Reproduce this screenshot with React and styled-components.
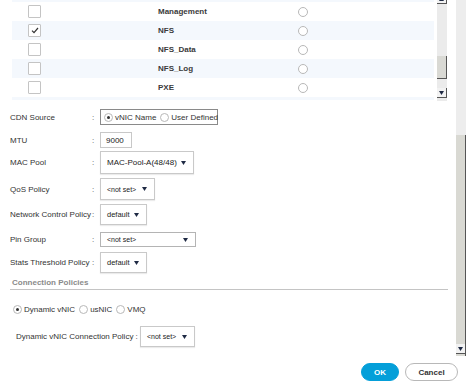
import React from 'react'
import styled, { createGlobalStyle } from 'styled-components'

const GlobalStyle = createGlobalStyle`
  html, body {
    margin: 0;
    padding: 0;
    background: #ffffff;
  }
  body {
    font-family: "Liberation Sans", Arial, sans-serif;
    color: #333333;
  }
`

const vlans = [
  { name: '' },
  { name: 'Management' },
  { name: 'NFS', checked: true },
  { name: 'NFS_Data' },
  { name: 'NFS_Log' },
  { name: 'PXE' },
  { name: '' }
]

const Arrow = ({ up }) => (
  <svg width="5" height="4" viewBox="0 0 5 4">
    <path d={up ? 'M0 4 L2.5 0 L5 4 Z' : 'M0 0 L5 0 L2.5 4 Z'} fill="#1f2a44" />
  </svg>
)

const Check = () => (
  <svg width="8" height="7" viewBox="0 0 8 7">
    <path d="M1 3.6 L3 5.6 L7 1" fill="none" stroke="#333" strokeWidth="1.2" />
  </svg>
)

const Radio = ({ checked, size = 9 }) => (
  <RadioCircle size={size}>{checked && <RadioDot />}</RadioCircle>
)

const Select = ({ value, width, height, size = 7.5, thin }) => (
  <SelectBox width={width} height={height} thin={thin}>
    <SelectText size={size}>{value}</SelectText>
    <Arrow />
  </SelectBox>
)

const App = () => {
  return (
    <Page>
      <GlobalStyle />
      <Body>
        <Main>
          <TablePane>
            <Viewport>
              <RowList>
                {vlans.map((v, i) => (
                  <VlanRow key={i} shaded={i % 2 === 0}>
                    <CheckCell>
                      <CheckBox>{v.checked && <Check />}</CheckBox>
                    </CheckCell>
                    <NameCell>{v.name}</NameCell>
                    <RadioCell>
                      <Radio size={10} />
                    </RadioCell>
                  </VlanRow>
                ))}
              </RowList>
            </Viewport>
            <InnerScroll>
              <ScrollButton>
                <Arrow up />
              </ScrollButton>
              <Track size={52} />
              <InnerThumb />
              <Track size={9} />
              <ScrollButton>
                <Arrow />
              </ScrollButton>
            </InnerScroll>
          </TablePane>

          <Form>
            <Field top={8}>
              <Label>CDN Source</Label>
              <Colon>:</Colon>
              <RadioGroup>
                <Radio checked />
                <OptionText>vNIC Name</OptionText>
                <Radio />
                <OptionText>User Defined</OptionText>
              </RadioGroup>
            </Field>
            <Field top={7}>
              <Label>MTU</Label>
              <Colon>:</Colon>
              <TextInput>9000</TextInput>
            </Field>
            <Field top={3}>
              <Label>MAC Pool</Label>
              <Colon>:</Colon>
              <Select value="MAC-Pool-A(48/48)" width={94} height={23} size={8} />
            </Field>
            <Field top={4}>
              <Label>QoS Policy</Label>
              <Colon>:</Colon>
              <Select value="<not set>" width={55} height={22} size={7} />
            </Field>
            <Field top={4}>
              <Label>Network Control Policy</Label>
              <Colon>:</Colon>
              <Select value="default" width={47} height={21} />
            </Field>
            <Field top={7}>
              <Label>Pin Group</Label>
              <Colon>:</Colon>
              <Select value="<not set>" width={96} height={15} size={7} thin />
            </Field>
            <Field top={5}>
              <Label>Stats Threshold Policy</Label>
              <Colon>:</Colon>
              <Select value="default" width={47} height={21} />
            </Field>

            <SectionTitle>Connection Policies</SectionTitle>
            <Divider />

            <ChoiceRow>
              <Radio checked />
              <OptionText>Dynamic vNIC</OptionText>
              <Radio />
              <OptionText>usNIC</OptionText>
              <Radio />
              <OptionText>VMQ</OptionText>
            </ChoiceRow>

            <PolicyRow>
              <PolicyLabel>Dynamic vNIC Connection Policy :</PolicyLabel>
              <Select value="<not set>" width={55} height={21} size={7} />
            </PolicyRow>
          </Form>
        </Main>

        <OuterScroll>
          <OuterTrack />
          <OuterThumb>
            <ScrollButton>
              <Arrow />
            </ScrollButton>
          </OuterThumb>
        </OuterScroll>
      </Body>

      <Footer>
        <Button primary>OK</Button>
        <Button>Cancel</Button>
      </Footer>
    </Page>
  )
}

const Page = styled.div`
  width: 473px;
  height: 391px;
  display: flex;
  flex-direction: column;
  overflow: hidden;
  background: #ffffff;
`

const Body = styled.div`
  display: flex;
  height: 356px;
`

const Main = styled.div`
  flex: 1;
  min-width: 0;
  display: flex;
  flex-direction: column;
`

const TablePane = styled.div`
  display: flex;
  height: 101px;
  padding-left: 12px;
  overflow: hidden;
`

const Viewport = styled.div`
  width: 422px;
  height: 100px;
  overflow: hidden;
`

const RowList = styled.div`
  margin-top: -17px;
`

const VlanRow = styled.div`
  display: grid;
  grid-template-columns: 146px 128px 1fr;
  align-items: center;
  height: 19px;
  background: ${props => (props.shaded ? '#f4f8fd' : '#ffffff')};
`

const CheckCell = styled.div`
  padding-left: 16px;
  display: flex;
`

const CheckBox = styled.div`
  width: 11px;
  height: 11px;
  border: 1px solid #c4c4c4;
  border-radius: 1px;
  background: #ffffff;
  display: flex;
  align-items: center;
  justify-content: center;
`

const NameCell = styled.div`
  font-size: 8px;
  font-weight: bold;
  color: #3a3a3a;
`

const RadioCell = styled.div`
  padding-left: 12px;
  display: flex;
`

const RadioCircle = styled.div`
  width: ${props => props.size - 2}px;
  height: ${props => props.size - 2}px;
  border: 1px solid #b8b8b8;
  border-radius: 50%;
  background: #ffffff;
  display: flex;
  align-items: center;
  justify-content: center;
  flex-shrink: 0;
`

const RadioDot = styled.div`
  width: 3px;
  height: 3px;
  border-radius: 50%;
  background: #333333;
`

const InnerScroll = styled.div`
  width: 10px;
  margin-left: 3px;
  margin-top: -6px;
  display: flex;
  flex-direction: column;
  background: #ebebeb;
`

const ScrollButton = styled.div`
  width: 9px;
  height: 9px;
  background: #f2f2f2;
  border-right: 1px solid #555555;
  border-bottom: 1px solid #555555;
  display: flex;
  align-items: center;
  justify-content: center;
  flex-shrink: 0;
`

const Track = styled.div`
  height: ${props => props.size}px;
`

const InnerThumb = styled.div`
  height: 23px;
  background: #d9d9d4;
  border-right: 1px solid #555555;
  border-bottom: 1px solid #555555;
  box-sizing: border-box;
`

const Form = styled.div`
  display: flex;
  flex-direction: column;
  padding-left: 10px;
  font-size: 8px;
`

const Field = styled.div`
  display: flex;
  align-items: center;
  margin-top: ${props => props.top}px;
`

const Label = styled.div`
  width: 82px;
  white-space: nowrap;
  color: #333333;
`

const Colon = styled.div`
  width: 8px;
  color: #555555;
`

const RadioGroup = styled.div`
  width: 118px;
  height: 16px;
  box-sizing: border-box;
  border: 1px solid #8a8a8a;
  display: flex;
  align-items: center;
  gap: 2px;
  padding-left: 3px;
  white-space: nowrap;
`

const OptionText = styled.span`
  color: #333333;
  margin-right: 2px;
  white-space: nowrap;
  flex-shrink: 0;
`

const TextInput = styled.div`
  width: 32px;
  height: 16px;
  box-sizing: border-box;
  border: 1px solid #c8c8c8;
  display: flex;
  align-items: center;
  padding-left: 5px;
  color: #222222;
`

const SelectBox = styled.div`
  width: ${props => props.width}px;
  height: ${props => props.height}px;
  box-sizing: border-box;
  border: 1px solid ${props => (props.thin ? '#b4b4b4' : '#c9c9c9')};
  box-shadow: ${props => (props.thin ? 'none' : '0 1px 1px rgba(0, 0, 0, 0.08)')};
  display: flex;
  align-items: center;
  justify-content: space-between;
  padding: 0 7px 0 6px;
  background: #ffffff;
`

const SelectText = styled.span`
  font-size: ${props => props.size}px;
  color: #222222;
  white-space: nowrap;
`

const SectionTitle = styled.div`
  margin-top: 4px;
  padding-left: 2px;
  font-weight: bold;
  color: #8a8a8a;
  height: 11px;
  line-height: 11px;
`

const Divider = styled.div`
  margin-top: 1px;
  height: 1px;
  background: #c4c4c4;
  margin-right: 8px;
`

const ChoiceRow = styled.div`
  display: flex;
  align-items: center;
  gap: 2px;
  margin-top: 15px;
  padding-left: 3px;
`

const PolicyRow = styled.div`
  display: flex;
  align-items: center;
  margin-top: 12px;
  padding-left: 6px;
`

const PolicyLabel = styled.div`
  width: 124px;
  white-space: nowrap;
`

const OuterScroll = styled.div`
  width: 10px;
  margin-right: 7px;
  display: flex;
  flex-direction: column;
`

const OuterTrack = styled.div`
  height: 135px;
  background: #ededed;
`

const OuterThumb = styled.div`
  flex: 1;
  display: flex;
  flex-direction: column;
  justify-content: flex-end;
  padding-bottom: 2px;
  background: #d9d9d3;
  border-right: 1px solid #555555;
`

const Footer = styled.div`
  display: flex;
  justify-content: flex-end;
  gap: 6px;
  padding: 7px 15px 0 0;
`

const Button = styled.div`
  height: 18px;
  min-width: ${props => (props.primary ? '38px' : '53px')};
  box-sizing: border-box;
  border-radius: 9px;
  display: flex;
  align-items: center;
  justify-content: center;
  font-size: 8px;
  font-weight: bold;
  background: ${props => (props.primary ? '#049fd9' : '#ffffff')};
  color: ${props => (props.primary ? '#ffffff' : '#333333')};
  border: 1px solid ${props => (props.primary ? '#049fd9' : '#b8b8b8')};
`

export default App
